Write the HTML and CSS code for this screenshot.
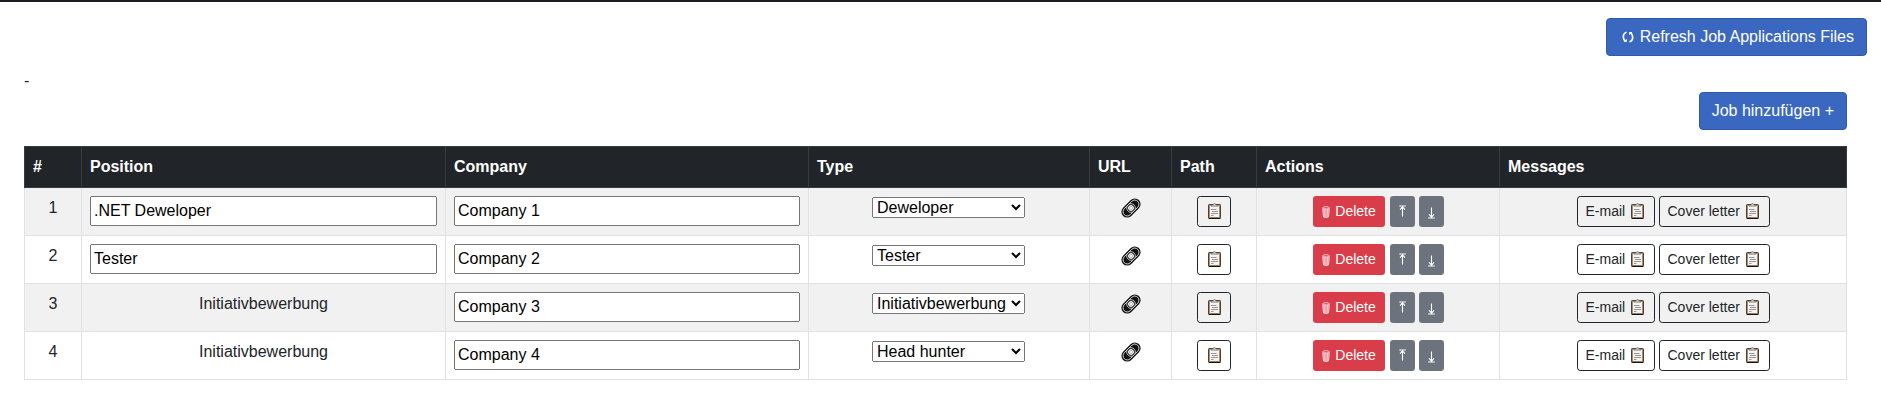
FILE: index.html
```html
<!DOCTYPE html>
<html lang="de">
<head>
<meta charset="utf-8">
<title>Job Applications</title>
<link rel="stylesheet" href="styles.css">
</head>
<body>
<svg class="symbols" aria-hidden="true">
  <symbol id="clipboard" viewBox="0 0 13 16">
    <rect x=".5" y="1.5" width="12" height="14" rx=".8" fill="#b08c66" stroke="#4a4038" stroke-width="1"/>
    <path d="M.8 15.4h11.5" stroke="#15130f" stroke-width="1.1"/>
    <path d="M2 3h9v11H2z" fill="#f4f4f4"/>
    <path d="M3.2 3.2V1.9h1.8Q5.3.5 6.5.5T8 1.9h1.8v1.3z" fill="#c9c9c9" stroke="#66615c" stroke-width=".6"/>
    <path d="M3 6.5h5.5M4 8.5h6M3 10.5h7M3 12.5h2.5" stroke="#96969a" stroke-width="1"/>
  </symbol>
  <symbol id="link" viewBox="0 0 20 20">
    <g transform="rotate(-45 10 10)" fill="none">
      <rect x="-1.2" y="4.2" width="22.4" height="11.6" rx="5.8" fill="#111"/>
      <rect x=".5" y="5.8" width="19" height="8.4" rx="4.2" stroke="#ddd" stroke-width=".9"/>
      <circle cx="10" cy="10" r="4.3" fill="#111" stroke="#ddd" stroke-width=".8"/>
      <circle cx="10" cy="10" r="2.9" fill="#eee"/>
      <circle cx="10" cy="10" r="1.5" fill="#fff" stroke="#888" stroke-width=".5"/>
    </g>
  </symbol>
  <symbol id="trash" viewBox="0 0 8 12">
    <path d="M.8 2.6 1.5 11q2.5 1 5 0l.7-8.4z" fill="#fff" fill-opacity=".35"/>
    <path d="M.7 2.5 1.5 11q2.5 1 5 0l.8-8.5M2.8 3.5l.2 7.3M5.2 3.5 5 10.8" fill="none" stroke="#fff" stroke-opacity=".85" stroke-width=".9"/>
    <ellipse cx="4" cy="1.9" rx="3.4" ry="1.2" fill="none" stroke="#fff" stroke-opacity=".9" stroke-width=".8"/>
  </symbol>
  <symbol id="up" viewBox="0 0 7 12">
    <path d="M.2 1h6.6M3.5 1.5v10M1 4.6l2.5-2.7L6 4.6" fill="none" stroke="#fff" stroke-width="1.1"/>
  </symbol>
  <symbol id="down" viewBox="0 0 7 12">
    <path d="M.2 11h6.6M3.5.5v10M1 7.4l2.5 2.7L6 7.4" fill="none" stroke="#fff" stroke-width="1.1"/>
  </symbol>
  <symbol id="refresh" viewBox="0 0 12 12">
    <path d="M4.6 1.2Q1.3 2.2 1.3 5.8q0 3 2.3 4.6M7.4 10.8q3.3-1 3.3-4.6 0-3-2.3-4.6" fill="none" stroke="#fff" stroke-width="1.7"/>
    <path d="M1.6 10.9h3.2V7.8zM10.4 1.1H7.2v3.1z" fill="#fff"/>
  </symbol>
</svg>

<header class="topbar">
  <button class="btn btn-primary"><svg class="icon-refresh"><use href="#refresh"/></svg>Refresh Job Applications Files</button>
</header>

<main class="content">
  <div class="status">-</div>
  <div class="toolbar"><button class="btn btn-primary">Job hinzufügen +</button></div>

  <table class="jobs">
    <colgroup>
      <col class="col-number"><col class="col-position"><col class="col-company"><col class="col-type">
      <col class="col-url"><col class="col-path"><col class="col-actions"><col class="col-messages">
    </colgroup>
    <thead>
      <tr><th>#</th><th>Position</th><th>Company</th><th>Type</th><th>URL</th><th>Path</th><th>Actions</th><th>Messages</th></tr>
    </thead>
    <tbody>
      <tr>
        <td>1</td>
        <td><input class="field" value=".NET Deweloper"></td>
        <td><input class="field" value="Company 1"></td>
        <td><select class="type"><option>Deweloper</option></select></td>
        <td><svg class="icon-link"><use href="#link"/></svg></td>
        <td><div class="group"><button class="btn btn-sm btn-outline btn-path"><svg class="icon-clipboard"><use href="#clipboard"/></svg></button></div></td>
        <td><div class="group"><button class="btn btn-sm btn-danger"><svg class="icon-trash"><use href="#trash"/></svg>Delete</button><button class="btn btn-sm btn-move"><svg class="icon-arrow"><use href="#up"/></svg></button><button class="btn btn-sm btn-move"><svg class="icon-arrow icon-arrow-down"><use href="#down"/></svg></button></div></td>
        <td><div class="group"><button class="btn btn-sm btn-outline btn-mail">E-mail<svg class="icon-clipboard"><use href="#clipboard"/></svg></button><button class="btn btn-sm btn-outline btn-letter">Cover letter<svg class="icon-clipboard"><use href="#clipboard"/></svg></button></div></td>
      </tr>
      <tr>
        <td>2</td>
        <td><input class="field" value="Tester"></td>
        <td><input class="field" value="Company 2"></td>
        <td><select class="type"><option>Tester</option></select></td>
        <td><svg class="icon-link"><use href="#link"/></svg></td>
        <td><div class="group"><button class="btn btn-sm btn-outline btn-path"><svg class="icon-clipboard"><use href="#clipboard"/></svg></button></div></td>
        <td><div class="group"><button class="btn btn-sm btn-danger"><svg class="icon-trash"><use href="#trash"/></svg>Delete</button><button class="btn btn-sm btn-move"><svg class="icon-arrow"><use href="#up"/></svg></button><button class="btn btn-sm btn-move"><svg class="icon-arrow icon-arrow-down"><use href="#down"/></svg></button></div></td>
        <td><div class="group"><button class="btn btn-sm btn-outline btn-mail">E-mail<svg class="icon-clipboard"><use href="#clipboard"/></svg></button><button class="btn btn-sm btn-outline btn-letter">Cover letter<svg class="icon-clipboard"><use href="#clipboard"/></svg></button></div></td>
      </tr>
      <tr>
        <td>3</td>
        <td>Initiativbewerbung</td>
        <td><input class="field" value="Company 3"></td>
        <td><select class="type"><option>Initiativbewerbung</option></select></td>
        <td><svg class="icon-link"><use href="#link"/></svg></td>
        <td><div class="group"><button class="btn btn-sm btn-outline btn-path"><svg class="icon-clipboard"><use href="#clipboard"/></svg></button></div></td>
        <td><div class="group"><button class="btn btn-sm btn-danger"><svg class="icon-trash"><use href="#trash"/></svg>Delete</button><button class="btn btn-sm btn-move"><svg class="icon-arrow"><use href="#up"/></svg></button><button class="btn btn-sm btn-move"><svg class="icon-arrow icon-arrow-down"><use href="#down"/></svg></button></div></td>
        <td><div class="group"><button class="btn btn-sm btn-outline btn-mail">E-mail<svg class="icon-clipboard"><use href="#clipboard"/></svg></button><button class="btn btn-sm btn-outline btn-letter">Cover letter<svg class="icon-clipboard"><use href="#clipboard"/></svg></button></div></td>
      </tr>
      <tr>
        <td>4</td>
        <td>Initiativbewerbung</td>
        <td><input class="field" value="Company 4"></td>
        <td><select class="type"><option>Head hunter</option></select></td>
        <td><svg class="icon-link"><use href="#link"/></svg></td>
        <td><div class="group"><button class="btn btn-sm btn-outline btn-path"><svg class="icon-clipboard"><use href="#clipboard"/></svg></button></div></td>
        <td><div class="group"><button class="btn btn-sm btn-danger"><svg class="icon-trash"><use href="#trash"/></svg>Delete</button><button class="btn btn-sm btn-move"><svg class="icon-arrow"><use href="#up"/></svg></button><button class="btn btn-sm btn-move"><svg class="icon-arrow icon-arrow-down"><use href="#down"/></svg></button></div></td>
        <td><div class="group"><button class="btn btn-sm btn-outline btn-mail">E-mail<svg class="icon-clipboard"><use href="#clipboard"/></svg></button><button class="btn btn-sm btn-outline btn-letter">Cover letter<svg class="icon-clipboard"><use href="#clipboard"/></svg></button></div></td>
      </tr>
    </tbody>
  </table>
</main>
</body>
</html>
```

FILE: styles.css
```css
*, *::before, *::after { box-sizing: border-box; }

body {
  margin: 0;
  border-top: 2px solid #1b1b22;
  background: #fff;
  color: #212529;
  font: 16px/24px "Liberation Sans", Arial, sans-serif;
  overflow: hidden;
}

svg { flex: none; }
.symbols { display: none; }

.topbar {
  display: flex;
  justify-content: flex-end;
  padding: 16px 14px 12px 0;
}

.content { padding: 0 34px 0 24px; }
.status { height: 24px; padding-top: 1px; }
.toolbar { display: flex; justify-content: flex-end; margin-bottom: 16px; }

.btn {
  display: inline-flex;
  align-items: center;
  justify-content: center;
  height: 38px;
  padding: 0 12px;
  border: 1px solid transparent;
  border-radius: 4px;
  font: inherit;
  white-space: nowrap;
}
.btn-primary { background: #3a68c0; border-color: #3259a8; color: #fff; }
.btn-sm { height: 31px; padding: 0 8px; border-radius: 3.2px; font-size: 14px; line-height: 21px; }
.btn-danger { width: 72px; margin-right: 1px; background: #d93d49; color: #fff; }
.btn-move { width: 25px; padding: 0; background: #6c737c; }
.btn-outline { background: transparent; border-color: #212529; color: #212529; }
.btn-path { width: 34px; padding: 0 0 0 1px; }
.btn-mail { width: 78px; padding: 0 10px 0 8px; justify-content: space-between; }
.btn-letter { width: 111px; padding: 0 10px 0 8px; justify-content: space-between; }

.jobs {
  width: 1823px;
  border-collapse: collapse;
  table-layout: fixed;
}
.col-number { width: 57px; }
.col-position { width: 364px; }
.col-company { width: 363px; }
.col-type { width: 281px; }
.col-url { width: 82px; }
.col-path { width: 85px; }
.col-actions { width: 243px; }
.col-messages { width: 347px; }

.jobs th {
  padding: 8px;
  border: 1px solid #373b3e;
  background: #212529;
  color: #fff;
  text-align: left;
}
.jobs td {
  height: 48px;
  padding: 8px;
  border: 1px solid #dee2e6;
  text-align: center;
  vertical-align: top;
}
.jobs tbody tr:nth-child(odd) { background: #f1f1f1; }

.group { display: flex; justify-content: center; gap: 4px; }

.field {
  display: block;
  width: 100%;
  height: 30px;
  margin: 0;
  font: inherit;
}
.type {
  display: block;
  width: 153px;
  height: 21px;
  margin: 1px auto 0 55px;
  font: 16px "Liberation Sans", Arial, sans-serif;
}

.icon-refresh { width: 12px; height: 12px; margin: 0 6px 0 3px; }
.icon-clipboard { width: 13px; height: 16px; margin-top: -1px; }
.icon-link { display: block; width: 20px; height: 20px; margin: 2px auto 0; }
.icon-trash { width: 8px; height: 12px; margin: 0 5px 0 1px; }
.icon-arrow { width: 7px; height: 12px; margin-top: -2px; }
.icon-arrow-down { margin-top: 2px; }
```
